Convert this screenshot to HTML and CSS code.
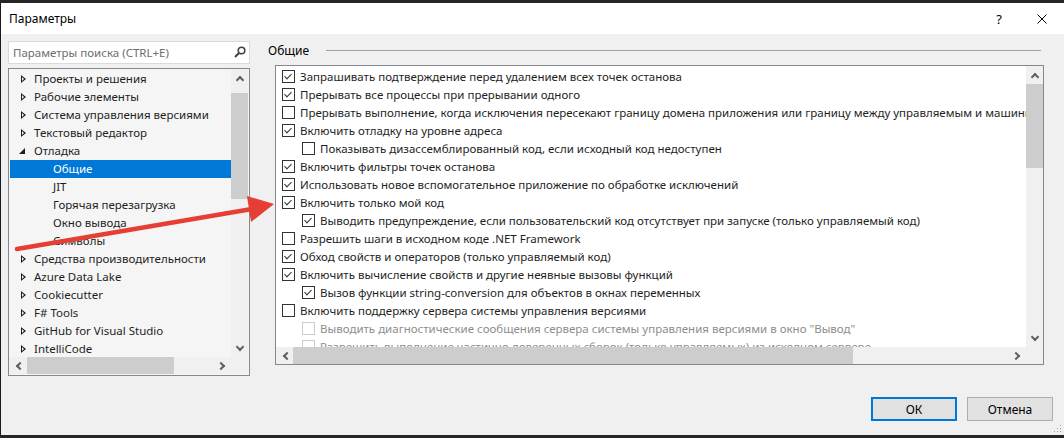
FILE: index.html
```html
<!DOCTYPE html>
<html lang="ru">
  <head>
    <meta charset="UTF-8" />
    <title>Параметры</title>
    <link rel="stylesheet" href="styles.css">
  </head>
  <body>
    <div class="window">
      <div class="titlebar">
        <span class="title">Параметры</span>
        <span class="help">?</span>
        <svg class="close" width="10" height="10" viewBox="0 0 10 10">
          <path d="M0.5 0.5 L9.5 9.5 M9.5 0.5 L0.5 9.5" stroke="#000" stroke-width="1" fill="none" />
        </svg>
      </div>

      <div class="dialog-body">
        <div class="columns">
          <div class="nav">
            <div class="search">
              <span class="search-hint">Параметры поиска (CTRL+E)</span>
              <svg class="search-icon" width="12" height="12" viewBox="0 0 12 12">
                <circle cx="7.5" cy="4.5" r="3.3" stroke="#424242" stroke-width="1.6" fill="none" />
                <path d="M5.2 6.8 L1 11" stroke="#424242" stroke-width="2" />
              </svg>
            </div>

            <div class="tree">
              <ul class="tree-view">
                <li class="node"><i class="twisty"></i>Проекты и решения</li>
                <li class="node"><i class="twisty"></i>Рабочие элементы</li>
                <li class="node"><i class="twisty"></i>Система управления версиями</li>
                <li class="node"><i class="twisty"></i>Текстовый редактор</li>
                <li class="node"><i class="twisty open"></i>Отладка</li>
                <li class="node child selected">Общие</li>
                <li class="node child">JIT</li>
                <li class="node child">Горячая перезагрузка</li>
                <li class="node child">Окно вывода</li>
                <li class="node child">Символы</li>
                <li class="node"><i class="twisty"></i>Средства производительности</li>
                <li class="node"><i class="twisty"></i>Azure Data Lake</li>
                <li class="node"><i class="twisty"></i>Cookiecutter</li>
                <li class="node"><i class="twisty"></i>F# Tools</li>
                <li class="node"><i class="twisty"></i>GitHub for Visual Studio</li>
                <li class="node"><i class="twisty"></i>IntelliCode</li>
              </ul>
              <div class="vscroll">
                <span class="sb-btn"><i class="chev up"></i></span>
                <span class="thumb tree-vthumb"></span>
                <span class="sb-btn end"><i class="chev down"></i></span>
              </div>
              <div class="hscroll">
                <span class="sb-btn"><i class="chev left"></i></span>
                <span class="thumb tree-hthumb"></span>
                <span class="sb-btn end"><i class="chev right"></i></span>
              </div>
              <div class="corner"></div>
            </div>
          </div>

          <div class="page">
            <div class="page-head">
              <span>Общие</span>
              <span class="rule"></span>
            </div>

            <div class="options">
              <div class="options-view">
                <label class="opt"><i class="box on"></i>Запрашивать подтверждение перед удалением всех точек останова</label>
                <label class="opt"><i class="box on"></i>Прерывать все процессы при прерывании одного</label>
                <label class="opt"><i class="box"></i>Прерывать выполнение, когда исключения пересекают границу домена приложения или границу между управляемым и машинн</label>
                <label class="opt"><i class="box on"></i>Включить отладку на уровне адреса</label>
                <label class="opt sub"><i class="box"></i>Показывать дизассемблированный код, если исходный код недоступен</label>
                <label class="opt"><i class="box on"></i>Включить фильтры точек останова</label>
                <label class="opt"><i class="box on"></i>Использовать новое вспомогательное приложение по обработке исключений</label>
                <label class="opt"><i class="box on"></i>Включить только мой код</label>
                <label class="opt sub"><i class="box on"></i>Выводить предупреждение, если пользовательский код отсутствует при запуске (только управляемый код)</label>
                <label class="opt"><i class="box"></i>Разрешить шаги в исходном коде .NET Framework</label>
                <label class="opt"><i class="box on"></i>Обход свойств и операторов (только управляемый код)</label>
                <label class="opt"><i class="box on"></i>Включить вычисление свойств и другие неявные вызовы функций</label>
                <label class="opt sub"><i class="box on"></i>Вызов функции string-conversion для объектов в окнах переменных</label>
                <label class="opt"><i class="box"></i>Включить поддержку сервера системы управления версиями</label>
                <label class="opt sub disabled"><i class="box"></i>Выводить диагностические сообщения сервера системы управления версиями в окно "Вывод"</label>
                <label class="opt sub disabled"><i class="box"></i>Разрешить выполнение частично доверенных сборок (только управляемых) из исходном сервере</label>
              </div>
              <div class="vscroll">
                <span class="sb-btn"><i class="chev up"></i></span>
                <span class="thumb opt-vthumb"></span>
                <span class="sb-btn end"><i class="chev down"></i></span>
              </div>
              <div class="hscroll">
                <span class="sb-btn"><i class="chev left"></i></span>
                <span class="thumb opt-hthumb"></span>
                <span class="sb-btn end"><i class="chev right"></i></span>
              </div>
              <div class="corner"></div>
            </div>
          </div>
        </div>

        <div class="footer">
          <button class="btn btn-default">ОК</button>
          <button class="btn">Отмена</button>
        </div>
      </div>

      <svg class="grip" width="9" height="9" viewBox="0 0 9 9">
        <rect x="7" y="1" width="1" height="1" fill="#a0a0a0" />
        <rect x="4" y="4" width="1" height="1" fill="#a0a0a0" />
        <rect x="7" y="4" width="1" height="1" fill="#a0a0a0" />
        <rect x="1" y="7" width="1" height="1" fill="#a0a0a0" />
        <rect x="4" y="7" width="1" height="1" fill="#a0a0a0" />
        <rect x="7" y="7" width="1" height="1" fill="#a0a0a0" />
      </svg>
    </div>

    <!-- annotation drawn over the dialog -->
    <svg class="callout" width="1064" height="438" viewBox="0 0 1064 438">
      <path d="M17 249 L252 209" stroke="#e53e35" stroke-width="4.5" stroke-linecap="round" />
      <polygon points="274,204 247,196 251,222" fill="#e53e35" />
    </svg>
  </body>
</html>
```

FILE: styles.css
```css
* {
  margin: 0;
  padding: 0;
  box-sizing: border-box;
}

body {
  background: #262626;
  width: 1064px;
  height: 438px;
  overflow: hidden;
  position: relative;
  font-family: "Noto Sans", "Liberation Sans", sans-serif;
  font-size: 11.5px;
  color: #1e1e1e;
}

.window {
  width: 1064px;
  height: 432px;
  margin-top: 3px;
  background: #f0f0f0;
  border-left: 1px solid #1a1a1a;
  position: relative;
}

/* title bar */
.titlebar {
  height: 31px;
  background: #fff;
  display: flex;
  align-items: center;
  padding: 0 17px 0 8px;
}

.title {
  color: #000;
  font-size: 12px;
}

.help {
  margin-left: auto;
  margin-right: 35px;
  font-size: 13px;
  color: #000;
}

/* dialog content */
.dialog-body {
  padding: 7px 11px 0 7px;
}

.columns {
  display: flex;
  gap: 18px;
  height: 335px;
}

.nav {
  width: 242px;
  display: flex;
  flex-direction: column;
}

.search {
  height: 23px;
  background: #fff;
  border: 1px solid #dadada;
  display: flex;
  align-items: center;
  padding: 0 3px 0 4px;
}

.search-hint {
  color: #6d6d6d;
  flex: 1;
}

.search-icon {
  margin-top: -1px;
}

.tree {
  margin-top: 4px;
  height: 308px;
  border: 1px solid #828790;
  background: #f5f5f5;
  display: grid;
  grid-template-columns: 1fr 17px;
  grid-template-rows: 1fr 17px;
  padding: 0 1px 1px 0;
}

.tree-view {
  list-style: none;
  overflow: hidden;
  padding: 1px 0 0 1px;
}

.node {
  height: 18px;
  line-height: 18px;
  display: flex;
  align-items: center;
  white-space: nowrap;
  padding-left: 11px;
}

.node.child {
  padding-left: 43px;
}

.node.selected {
  background: #0078d7;
  color: #fff;
}

.twisty {
  width: 13px;
  height: 8px;
  position: relative;
}

.twisty::before {
  content: "";
  position: absolute;
  left: 0;
  top: 0;
  width: 0;
  height: 0;
  border-left: 5px solid #1e1e1e;
  border-top: 4px solid transparent;
  border-bottom: 4px solid transparent;
}

.twisty::after {
  content: "";
  position: absolute;
  left: 1px;
  top: 2px;
  width: 0;
  height: 0;
  border-left: 2.5px solid #f5f5f5;
  border-top: 2px solid transparent;
  border-bottom: 2px solid transparent;
}

.twisty.open::before {
  left: -2px;
  top: 1px;
  border-left: 6px solid transparent;
  border-top: 0;
  border-bottom: 6px solid #1e1e1e;
}

.twisty.open::after {
  display: none;
}

/* scroll bars */
.vscroll,
.hscroll,
.corner {
  background: #f0f0f0;
}

.vscroll {
  display: flex;
  flex-direction: column;
}

.hscroll {
  display: flex;
}

.sb-btn {
  width: 17px;
  height: 17px;
  flex: none;
  display: flex;
  align-items: center;
  justify-content: center;
}

.sb-btn.end {
  margin-top: auto;
  margin-left: auto;
}

.hscroll .sb-btn {
  height: 100%;
}

.thumb {
  background: #cdcdcd;
  flex: none;
}

.chev {
  width: 6px;
  height: 6px;
  border-left: 2px solid #606060;
  border-top: 2px solid #606060;
}

.chev.up {
  transform: translateY(2px) rotate(45deg);
}

.chev.down {
  transform: translateY(-2px) rotate(225deg);
}

.chev.left {
  transform: translateX(2px) rotate(-45deg);
}

.chev.right {
  transform: translateX(-2px) rotate(135deg);
}

.tree-vthumb {
  margin-top: 7px;
  height: 106px;
  width: 17px;
}

.tree-hthumb {
  margin-left: 1px;
  width: 147px;
}

/* options page */
.page {
  width: 776px;
  display: flex;
  flex-direction: column;
}

.page-head {
  height: 18px;
  display: flex;
  align-items: center;
  color: #000;
  font-size: 12px;
}

.rule {
  flex: 1;
  height: 1px;
  background: #a0a0a0;
  margin: 0 3px 0 17px;
}

.options {
  margin: 6px 0 0 7px;
  height: 300px;
  border: 1px solid #828790;
  background: #fff;
  display: grid;
  grid-template-columns: 1fr 17px;
  grid-template-rows: 1fr 17px;
}

.options-view {
  overflow: hidden;
  padding-top: 1px;
}

.opt {
  height: 18px;
  display: flex;
  align-items: center;
  white-space: nowrap;
  padding-left: 6px;
}

.opt.sub {
  padding-left: 26px;
}

.opt.disabled {
  color: #8d8d8d;
}

.box {
  width: 13px;
  height: 13px;
  flex: none;
  border: 1px solid #333;
  background: #fff;
  margin-right: 5px;
  position: relative;
}

.box.on::after {
  content: "";
  position: absolute;
  left: 3px;
  top: 1px;
  width: 3px;
  height: 6px;
  border-right: 1px solid #333;
  border-bottom: 1px solid #333;
  transform: rotate(45deg);
}

.opt.disabled .box {
  border-color: #cccccc;
}

.opt-vthumb {
  margin-top: 1px;
  height: 84px;
  width: 17px;
}

.opt-hthumb {
  width: 560px;
}

/* buttons */
.footer {
  margin-top: 21px;
  display: flex;
  justify-content: flex-end;
  gap: 10px;
}

.btn {
  width: 86px;
  height: 24px;
  background: #e1e1e1;
  border: 1px solid #adadad;
  font: inherit;
  font-size: 12px;
  color: #000;
}

.btn-default {
  border: 2px solid #0078d7;
}

.grip {
  position: absolute;
  right: 2px;
  bottom: 2px;
}

.callout {
  position: absolute;
  left: 0;
  top: 0;
  pointer-events: none;
}
```
